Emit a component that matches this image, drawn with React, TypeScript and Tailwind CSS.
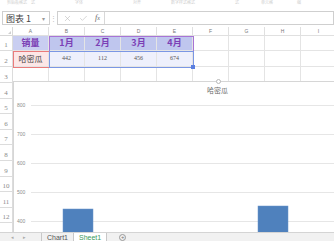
import React from "react";
import { X, Check } from "lucide-react";

const cols = ["A", "B", "C", "D", "E", "F", "G", "H", "I"];
const rowHeights = [15, 16, 16, 15.6, 15.6, 15.6, 15.6, 15.6, 15.6, 15.6, 15.6, 15.6, 16];

const Cell = ({ children, className = "" }: { children?: React.ReactNode; className?: string }) => (
  <div className={`w-[36px] shrink-0 h-full border-r border-b border-[#e4e4e4] flex items-center justify-center ${className}`}>
    {children}
  </div>
);

const Row = ({ n, h, children }: { n?: number; h: number; children?: React.ReactNode }) => (
  <div className="flex shrink-0" style={{ height: h }}>
    <div className="w-[13px] shrink-0 h-full border-r border-b border-[#dcdcdc] flex items-end justify-center pb-[1px] text-[7px] leading-none text-[#8a8a8a] font-['Liberation_Serif',serif]">
      {n}
    </div>
    {children}
  </div>
);

const Chart = () => (
  <div className="absolute left-[13px] top-[81px] w-[321px] h-[151px] bg-white border-t border-l border-[#d6d6d6]">
    <div className="pt-[5px] pl-[193px] text-[7px] leading-[7px] text-[#6b6b6b]">哈密瓜</div>
    <svg className="absolute left-0 top-0" width="321" height="151">
      {[
        [23.5, "800"],
        [52.5, "700"],
        [81.5, "600"],
        [110.5, "500"],
        [139.5, "400"],
      ].map(([y, t]) => (
        <g key={t as string}>
          <line x1="17" x2="321" y1={y as number} y2={y as number} stroke="#e6e6e6" strokeWidth="1" />
          <text x="3" y={(y as number) + 1.8} fontSize="5" fill="#8c8c8c" fontFamily="Liberation Sans, sans-serif">
            {t}
          </text>
        </g>
      ))}
      <rect x="49" y="127" width="30" height="24" fill="#4f81bd" stroke="#6a95c9" strokeWidth="0.5" />
      <rect x="244" y="124" width="30" height="27" fill="#4f81bd" stroke="#6a95c9" strokeWidth="0.5" />
    </svg>
    <div className="absolute -top-[3px] left-[202px] w-[5px] h-[5px] rounded-full bg-white border border-[#b8b8b8]" />
  </div>
);

export default function App() {
  return (
    <div className="relative w-[334px] h-[241px] overflow-hidden bg-white font-['Noto_Sans_CJK_SC','Liberation_Sans',sans-serif] text-[#333]">
      {/* ribbon group labels */}
      <div className="h-[9px] flex items-start text-[4px] leading-[5px] text-[#cfcfcf] whitespace-nowrap">
        <span className="ml-[7px]">剪贴板格式</span>
        <span className="ml-[4px]">式</span>
        <span className="ml-[40px]">字体</span>
        <span className="ml-[50px]">对齐</span>
        <span className="ml-[30px]">数字样式格式</span>
        <span className="ml-[40px]">式</span>
        <span className="ml-[22px]">单元格</span>
        <span className="ml-[24px]">编</span>
      </div>

      {/* formula bar */}
      <div className="h-[18px] flex items-center">
        <div className="ml-[2px] w-[48px] h-[14px] border border-[#cfcfcf] flex items-center justify-between pl-[3px] pr-[4px]">
          <span className="text-[9px] leading-none text-[#444]">图表 1</span>
          <span className="text-[6px] text-[#999]">▾</span>
        </div>
        <div className="w-[7px] flex justify-center text-[7px] text-[#c0c0c0]">⋮</div>
        <div className="flex-1 h-[14px] border border-[#cfcfcf] flex items-center">
          <div className="w-[47px] h-full flex items-center border-r border-[#d8d8d8]">
            <X className="ml-[5px] text-[#b8b8b8]" size={9} strokeWidth={1.5} />
            <Check className="ml-[7px] text-[#b8b8b8]" size={9} strokeWidth={1.5} />
            <span className="ml-[7px] italic text-[8px] leading-none text-[#666] font-['Liberation_Serif',serif]">
              f<span className="text-[6px]">x</span>
            </span>
          </div>
        </div>
      </div>

      {/* grid */}
      <div className="h-[205px] overflow-hidden flex flex-col">
        <div className="flex h-[9px] shrink-0">
          <div className="w-[13px] shrink-0 h-full border-r border-b border-[#d8d8d8] relative">
            <div className="absolute right-[1px] bottom-[1px] w-0 h-0 border-l-[3px] border-l-transparent border-b-[3px] border-b-[#d0d0d0]" />
          </div>
          {cols.map((c) => (
            <div
              key={c}
              className="w-[36px] shrink-0 h-full border-r border-b border-[#e0e0e0] flex items-center justify-center text-[5px] leading-none text-[#777] font-['Liberation_Sans',sans-serif]"
            >
              {c}
            </div>
          ))}
        </div>

        <Row n={1} h={rowHeights[0]}>
          <Cell className="bg-[#c9cef1] text-[9px] font-bold text-[#7b3fb5]">销量</Cell>
          {["1月", "2月", "3月", "4月"].map((m) => (
            <Cell key={m} className="bg-[#bfc6ee] text-[9px] font-bold text-[#7b3fb5]">
              {m}
            </Cell>
          ))}
          {[0, 1, 2, 3].map((i) => (
            <Cell key={i} />
          ))}
        </Row>

        <Row n={2} h={rowHeights[1]}>
          <Cell className="bg-[#fde7e7] text-[8px] text-[#444]">哈密瓜</Cell>
          {["442", "112", "456", "674"].map((v) => (
            <Cell key={v} className="bg-[#eef0fc] text-[6px] text-[#555] font-['Liberation_Serif',serif]">
              {v}
            </Cell>
          ))}
          {[0, 1, 2, 3].map((i) => (
            <Cell key={i} />
          ))}
        </Row>

        {rowHeights.slice(2).map((h, i) => (
          <Row key={i} n={i + 3 <= 12 ? i + 3 : undefined} h={h}>
            {cols.map((c) => (
              <Cell key={c} />
            ))}
          </Row>
        ))}
      </div>

      {/* data range outlines */}
      <div className="absolute left-[49px] top-[36px] w-[145px] h-[16px] border border-[#a774d6]" />
      <div className="absolute left-[13px] top-[51px] w-[37px] h-[17px] border border-[#ea7b7b]" />
      <div className="absolute left-[49px] top-[51px] w-[145px] h-[17px] border border-[#7b97e4]" />
      <div className="absolute left-[191px] top-[65px] w-[4px] h-[4px] bg-[#5b7fe0]" />

      <Chart />

      {/* sheet tabs */}
      <div className="relative h-[9px] bg-[#f1f1f1] border-t border-[#d4d4d4] flex items-center text-[7px] leading-none font-['Liberation_Sans',sans-serif]">
        <span className="ml-[11px] text-[5px] text-[#aaa]">◂</span>
        <span className="ml-[9px] text-[5px] text-[#aaa]">▸</span>
        <div className="ml-[15px] h-full border-l border-[#c8c8c8] pl-[5px] pr-[5px] flex items-center text-[#555]">Chart1</div>
        <div className="h-full bg-white border-l border-r border-[#c8c8c8] px-[5px] flex items-center text-[#3a9a5c]">Sheet1</div>
        <div className="ml-[12px] w-[7px] h-[7px] rounded-full border border-[#999] flex items-center justify-center text-[6px] text-[#777]">+</div>
      </div>
    </div>
  );
}
